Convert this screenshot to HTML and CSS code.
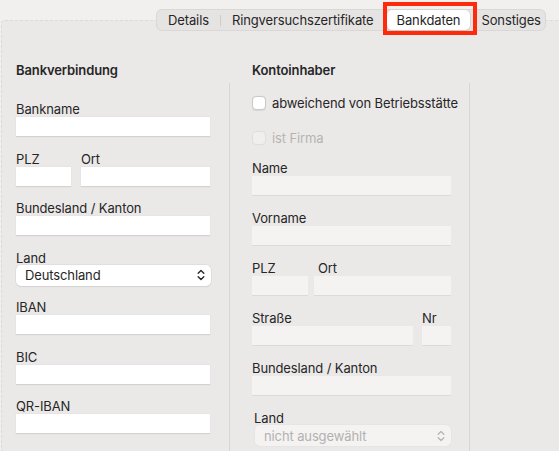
FILE: index.html
```html
<!DOCTYPE html>
<html lang="de">
<head>
<meta charset="utf-8">
<title>Bankdaten</title>
<link rel="stylesheet" href="styles.css">
</head>
<body>
<div class="window">
  <nav class="tabs">
    <span class="tab first">Details</span>
    <span class="sep"></span>
    <span class="tab">Ringversuchszertifikate</span>
    <span class="tab active">Bankdaten</span>
    <span class="tab last">Sonstiges</span>
  </nav>
  <div class="panel">
    <section class="col col-left">
      <h2 class="title">Bankverbindung</h2>
      <div class="body">
        <div class="field"><label>Bankname</label><div class="input"></div></div>
        <div class="row gap10">
          <div class="field w55"><label>PLZ</label><div class="input"></div></div>
          <div class="field grow"><label>Ort</label><div class="input"></div></div>
        </div>
        <div class="field"><label>Bundesland / Kanton</label><div class="input"></div></div>
        <div class="field"><label>Land</label>
          <div class="select"><span>Deutschland</span>
            <svg class="chev" width="8" height="12" viewBox="0 0 8 12"><path d="M1.2 4.3 L4 1.5 L6.8 4.3 M1.2 7.7 L4 10.5 L6.8 7.7" fill="none" stroke="#2a2a2a" stroke-width="1.4" stroke-linecap="round" stroke-linejoin="round"/></svg>
          </div>
        </div>
        <div class="field"><label>IBAN</label><div class="input"></div></div>
        <div class="field"><label>BIC</label><div class="input"></div></div>
        <div class="field"><label>QR-IBAN</label><div class="input"></div></div>
      </div>
    </section>
    <section class="col col-right">
      <h2 class="title">Kontoinhaber</h2>
      <div class="body">
        <div class="check"><span class="box"></span><span>abweichend von Betriebsstätte</span></div>
        <div class="check disabled"><span class="box"></span><span>ist Firma</span></div>
        <div class="field"><label>Name</label><div class="input off"></div></div>
        <div class="field"><label>Vorname</label><div class="input off"></div></div>
        <div class="row gap6">
          <div class="field w56"><label>PLZ</label><div class="input off"></div></div>
          <div class="field grow"><label class="in4">Ort</label><div class="input off"></div></div>
        </div>
        <div class="row gap9">
          <div class="field grow"><label>Straße</label><div class="input off"></div></div>
          <div class="field w29"><label>Nr</label><div class="input off"></div></div>
        </div>
        <div class="field"><label>Bundesland / Kanton</label><div class="input off"></div></div>
        <div class="field"><label class="in2">Land</label>
          <div class="select off"><span>nicht ausgewählt</span>
            <svg class="chev" width="8" height="12" viewBox="0 0 8 12"><path d="M1.2 4.3 L4 1.5 L6.8 4.3 M1.2 7.7 L4 10.5 L6.8 7.7" fill="none" stroke="#b9b7b6" stroke-width="1.4" stroke-linecap="round" stroke-linejoin="round"/></svg>
          </div>
        </div>
      </div>
    </section>
  </div>
</div>
</body>
</html>
```

FILE: styles.css
```css
* { box-sizing: border-box; }
html, body { margin: 0; padding: 0; }
body {
  background: #f2f0ef;
  font-family: Inter, "Noto Sans", "Liberation Sans", sans-serif;
  font-size: 13px;
  letter-spacing: -0.12px;
  color: #262626;
  width: 559px;
  height: 451px;
  overflow: hidden;
}
.window {
  display: flex;
  flex-direction: column;
  padding-top: 9px;
}
.tabs {
  position: relative;
  z-index: 2;
  align-self: flex-start;
  margin-left: 156px;
  height: 22px;
  display: flex;
  align-items: center;
  background: #e6e4e3;
  border: 1px solid #dad8d7;
  border-radius: 6px;
  margin-bottom: -11px;
}
.tab {
  position: relative;
  padding: 0 11px;
  line-height: 20px;
  white-space: nowrap;
}
.tab.first { padding-left: 11px; }
.tab.last { padding-left: 11px; padding-right: 4px; }
.sep {
  width: 1px;
  height: 11px;
  background: #cfcdcc;
}
.tab.active {
  background: #ffffff;
  border-radius: 5px;
  box-shadow: 0 0 0 0.5px #cfcdcc, 0 1px 1px rgba(0,0,0,0.12);
  margin-left: 2px;
  padding: 0 10px;
  line-height: 20px;
}
.tab.active::after {
  content: "";
  position: absolute;
  left: -4px;
  right: -7px;
  top: -8px;
  bottom: -5px;
  border: 4px solid #ff2a0b;
}
.panel {
  position: relative;
  z-index: 1;
  margin-left: 1px;
  height: 440px;
  background: #ebe9e8;
  border-top: 1px dashed #dcdad9;
  border-left: 1px dashed #dcdad9;
  border-top-left-radius: 4px;
  display: flex;
  padding-top: 41px;
}
.col { display: flex; flex-direction: column; }
.title {
  margin: 0;
  font-size: 13px;
  font-weight: 600;
  line-height: 16px;
  height: 21px;
}
.col-left { width: 228px; padding-left: 14px; }
.col-right { width: 240px; padding-left: 22px; }
.col .body {
  flex: 1;
  border-right: 1px solid #d8d6d5;
  display: flex;
  flex-direction: column;
}
.col-left .body { padding-top: 18px; padding-right: 19px; gap: 13.5px; }
.col-right .body { padding-top: 12px; padding-right: 18px; }
.col-right .body > .field, .col-right .body > .row { margin-bottom: 14px; }
.row { display: flex; }
.gap10 { gap: 10px; }
.gap6 { gap: 6px; }
.gap9 { gap: 9px; }
.w55 { width: 55px; }
.w56 { width: 56px; }
.w29 { width: 29px; flex: none; }
.grow { flex: 1; }
.field { display: flex; flex-direction: column; }
.field label { line-height: 16px; height: 16px; white-space: nowrap; }
.in4 { padding-left: 4px; }
.in2 { padding-left: 2px; }
.input {
  height: 20px;
  background: #ffffff;
  border-bottom: 1px solid #d4d2d1;
  box-shadow: 0 0 0 0.5px #e2e0df;
}
.input.off {
  background: #f4f3f2;
  border-bottom-color: #dddbda;
  box-shadow: none;
}
.select {
  height: 21px;
  background: #ffffff;
  border-radius: 5px;
  box-shadow: 0 0 0 0.5px #d6d4d3, 0 1px 1px rgba(0,0,0,0.10);
  display: flex;
  align-items: center;
  justify-content: space-between;
  padding: 0 6px 0 9px;
  margin-top: -1px;
  margin-right: -1px;
  color: #262626;
}
.select.off {
  background: #f4f3f2;
  color: #b3b1b0;
  box-shadow: 0 0 0 0.5px #e2e0df;
  margin-left: 3px;
  margin-right: 0;
}
.check {
  display: flex;
  align-items: center;
  gap: 6px;
  line-height: 16px;
  height: 16px;
  white-space: nowrap;
}
.check + .check { margin-top: 19px; }
.check.disabled { color: #b6b4b3; margin-bottom: 14px; }
.box {
  flex: none;
  width: 14px;
  height: 14px;
  border-radius: 4px;
  background: #ffffff;
  border: 1px solid #cbc9c8;
  box-shadow: 0 0.5px 1px rgba(0,0,0,0.08);
}
.check.disabled .box {
  background: #f1efee;
  border-color: #e0dedd;
  box-shadow: none;
}
```
